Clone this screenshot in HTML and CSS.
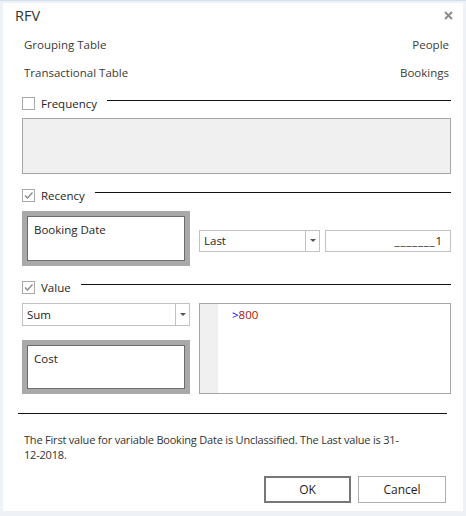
FILE: index.html
```html
<!DOCTYPE html>
<html lang="en">

<head>
    <meta charset="UTF-8">
    <meta name="viewport" content="width=device-width, initial-scale=1.0">
    <title>RFV</title>
    <link rel="stylesheet" href="styles.css">
</head>

<body>
    <div class="dialog">
        <!-- Title bar -->
        <div class="titlebar">
            <span class="title">RFV</span>
            <svg class="close" width="9" height="9" viewBox="0 0 9 9">
                <path d="M1 1 L8 8 M8 1 L1 8" stroke="#8c8c8c" stroke-width="2" fill="none" />
            </svg>
        </div>

        <!-- Tables -->
        <div class="info">
            <div class="info-row"><span>Grouping Table</span><span>People</span></div>
            <div class="info-row"><span>Transactional Table</span><span>Bookings</span></div>
        </div>

        <!-- Frequency -->
        <div class="section-head">
            <span class="check"></span>
            <span class="label">Frequency</span>
            <span class="rule"></span>
        </div>
        <div class="freq-box"></div>

        <!-- Recency -->
        <div class="section-head">
            <span class="check checked">
                <svg width="11" height="11" viewBox="0 0 11 11">
                    <path d="M2 5.5 L4.5 8 L9.5 2.5" stroke="#8a8a8a" stroke-width="1.3" fill="none" />
                </svg>
            </span>
            <span class="label">Recency</span>
            <span class="rule"></span>
        </div>
        <div class="recency-body">
            <div class="drop-box">Booking Date</div>
            <div class="select select-last">
                <span class="select-text">Last</span>
                <span class="select-btn"><span class="arrow"></span></span>
            </div>
            <div class="num-input"><span class="mask">_______</span>1</div>
        </div>

        <!-- Value -->
        <div class="section-head">
            <span class="check checked">
                <svg width="11" height="11" viewBox="0 0 11 11">
                    <path d="M2 5.5 L4.5 8 L9.5 2.5" stroke="#8a8a8a" stroke-width="1.3" fill="none" />
                </svg>
            </span>
            <span class="label">Value</span>
            <span class="rule"></span>
        </div>
        <div class="value-body">
            <div class="value-left">
                <div class="select select-sum">
                    <span class="select-text">Sum</span>
                    <span class="select-btn"><span class="arrow"></span></span>
                </div>
                <div class="drop-box cost">Cost</div>
            </div>
            <div class="editor">
                <div class="gutter"></div>
                <div class="code"><span class="op">&gt;</span><span class="num">800</span></div>
            </div>
        </div>

        <div class="divider"></div>

        <p class="message">The First value for variable Booking Date is Unclassified. The Last value is 31-<br>12-2018.</p>

        <div class="buttons">
            <button class="btn btn-default">OK</button>
            <button class="btn">Cancel</button>
        </div>
    </div>
</body>

</html>
```

FILE: styles.css
```css
body {
    margin: 0;
    padding: 0;
    background-color: #eef1f6;
    border-top: 1px solid #d4dfee;
    font-family: 'Open Sans', 'Noto Sans', sans-serif;
    font-size: 11.5px;
    color: #333;
}

.dialog {
    width: 460px;
    height: 508px;
    margin: 2px 3px 0 3px;
    padding: 0 12px 0 19px;
    box-sizing: border-box;
    background: #fff;
    display: flex;
    flex-direction: column;
}

/* Title bar */
.titlebar {
    height: 24px;
    margin-left: -7px;
    margin-right: -2px;
    display: flex;
    justify-content: space-between;
    align-items: center;
}

.title {
    font-size: 14.5px;
    color: #333;
}

.close {
    display: block;
}

/* Grouping / transactional rows */
.info {
    margin-top: 3px;
    padding: 0 2px;
}

.info-row {
    height: 28px;
    display: flex;
    justify-content: space-between;
    align-items: center;
    color: #3a3a3a;
}

/* Section headers with a rule */
.section-head {
    height: 20px;
    margin-top: 11px;
    display: flex;
    align-items: center;
}

.info + .section-head {
    margin-top: 7px;
}

.check {
    width: 11px;
    height: 11px;
    border: 1px solid #a8a8a8;
    background: #fff;
    margin-right: 6px;
    display: flex;
    align-items: center;
    justify-content: center;
}

.check svg {
    display: block;
}

.label {
    color: #1e1e1e;
}

.rule {
    flex: 1;
    height: 1px;
    background: #111;
    margin-left: 10px;
    margin-bottom: 6px;
}

.freq-box {
    height: 56px;
    margin-top: 5px;
    box-sizing: border-box;
    background: #f0f0f0;
    border: 1px solid #a6a6a6;
}

/* Recency */
.recency-body {
    margin-top: 6px;
    display: flex;
    align-items: center;
}

.drop-box {
    width: 168px;
    height: 55px;
    box-sizing: border-box;
    border: 5px solid #a9a9a9;
    box-shadow: inset 0 0 0 1px #6d6d6d;
    background: #fff;
    padding: 6px 7px;
    color: #1e1e1e;
}

.select {
    box-sizing: border-box;
    border: 1px solid #c2c2c2;
    background: #fff;
    display: flex;
    color: #1e1e1e;
}

.select-last {
    width: 121px;
    height: 22px;
    margin-left: 9px;
    margin-top: 4px;
}

.select-text {
    flex: 1;
    padding-left: 4px;
    display: flex;
    align-items: center;
}

.select-btn {
    width: 13px;
    border-left: 1px solid #c2c2c2;
    display: flex;
    align-items: center;
    justify-content: center;
}

.arrow {
    width: 0;
    height: 0;
    border-left: 3px solid transparent;
    border-right: 3px solid transparent;
    border-top: 3px solid #555;
}

.num-input {
    flex: 1;
    height: 22px;
    margin-left: 5px;
    margin-top: 4px;
    box-sizing: border-box;
    border: 1px solid #c2c2c2;
    padding-right: 8px;
    display: flex;
    align-items: center;
    justify-content: flex-end;
    color: #1e1e1e;
}

.mask {
    letter-spacing: 0.8px;
}

/* Value */
.value-body {
    margin-top: 6px;
    height: 91px;
    display: flex;
}

.value-left {
    width: 168px;
    display: flex;
    flex-direction: column;
    justify-content: space-between;
}

.select-sum {
    width: 168px;
    height: 23px;
}

.cost {
    height: 54px;
}

.editor {
    flex: 1;
    margin-left: 9px;
    box-sizing: border-box;
    border: 1px solid #a6a6a6;
    display: flex;
}

.gutter {
    width: 18px;
    background: #f0f0f0;
}

.code {
    padding: 3px 0 0 14px;
}

.op {
    color: #0000ff;
}

.num {
    color: #a31515;
}

.divider {
    height: 1px;
    background: #111;
    margin: 19px 4px 0 -4px;
}

.message {
    margin: 18px 0 0 2px;
    font-size: 11px;
    letter-spacing: -0.2px;
    line-height: 15px;
    color: #333;
}

.buttons {
    margin-top: 14px;
    margin-right: 5px;
    display: flex;
    justify-content: flex-end;
    gap: 7px;
}

.btn {
    width: 88px;
    height: 27px;
    font-family: inherit;
    font-size: 12px;
    color: #1e1e1e;
    background: #fff;
    border: 1px solid #adadad;
    border-radius: 0;
}

.btn-default {
    width: 87px;
    border: 2px solid #777;
}
```
